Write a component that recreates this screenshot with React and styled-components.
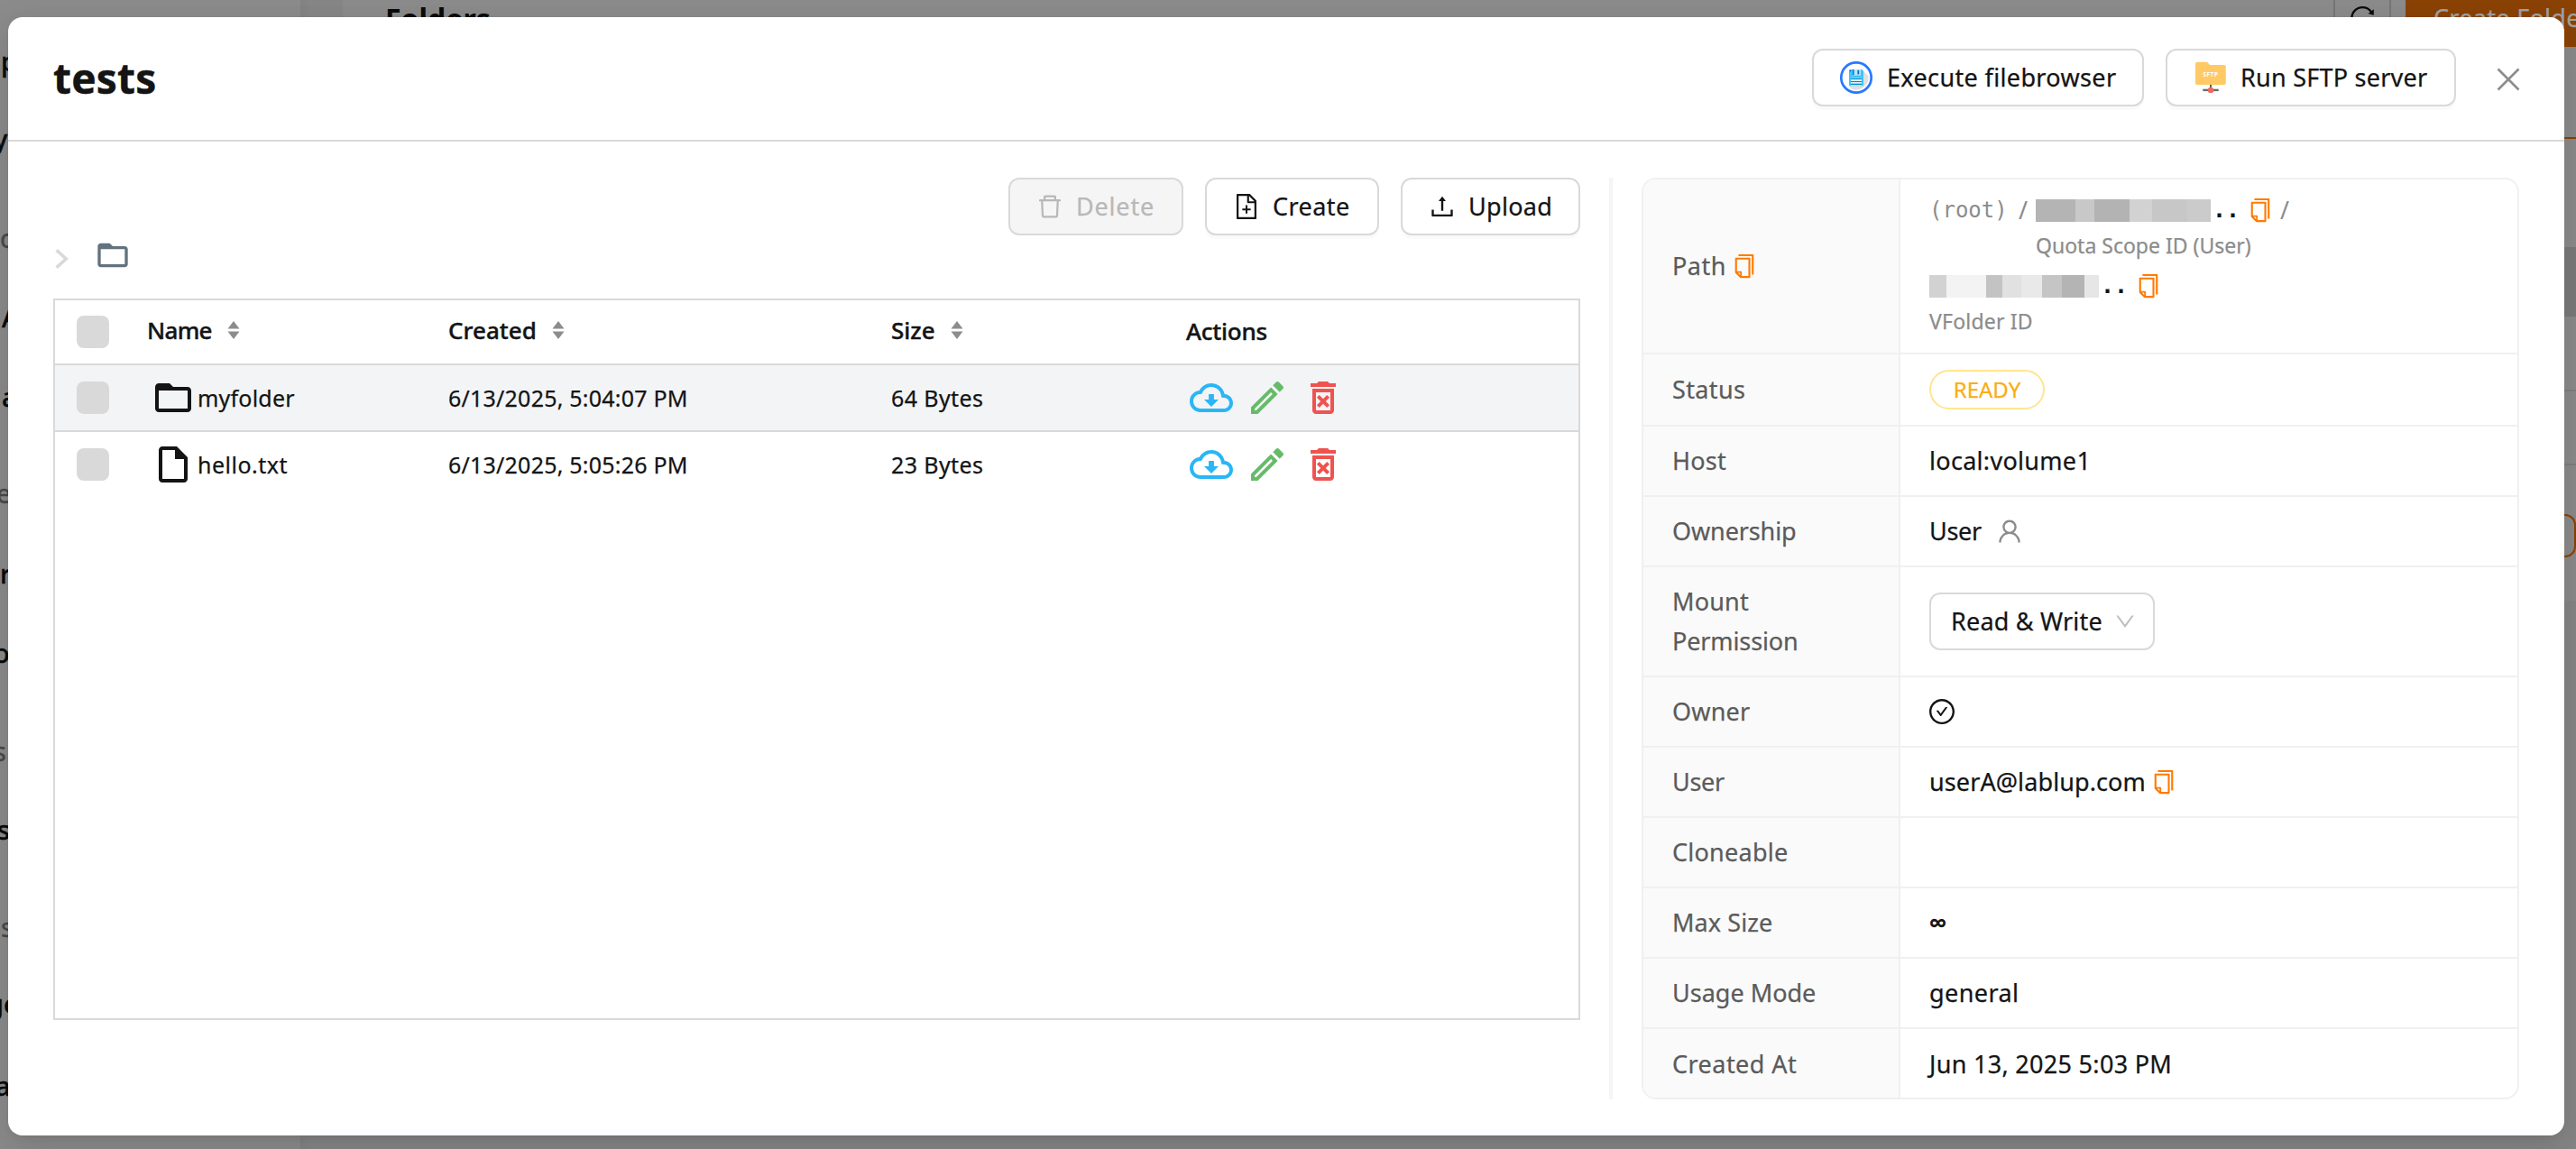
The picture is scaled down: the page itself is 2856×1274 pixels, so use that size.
import React from 'react';
import styled, { createGlobalStyle } from 'styled-components';
import {
  AiOutlineCopy,
  AiOutlineDelete,
  AiOutlineFileAdd,
  AiOutlineUpload,
  AiOutlineUser,
  AiOutlineDown,
  AiOutlineCheckCircle,
  AiOutlineReload,
} from 'react-icons/ai';

const GlobalStyle = createGlobalStyle`
  *, *::before, *::after { box-sizing: border-box; }
  html, body { margin: 0; padding: 0; }
  body {
    width: 2856px;
    height: 1274px;
    overflow: hidden;
    font-family: "Noto Sans", "Open Sans", sans-serif;
    font-size: 27px;
    line-height: 44px;
    color: #141414;
    background: #878787;
  }
  svg { display: block; flex: none; }
`;

const T = styled.span`
  letter-spacing: ${(p) => p.$ls || 0}px;
  white-space: nowrap;
  -webkit-text-stroke: ${(p) => p.$stroke ?? 0.25}px currentColor;
`;

/* ---------- page behind the dialog ---------- */

const Page = styled.div`
  display: flex;
  width: 2856px;
  height: 1274px;
  overflow: hidden;
  position: relative;
  background: #878787;
`;

const Sidebar = styled.div`
  width: 333px;
  height: 1274px;
  flex: none;
  background: #8c8c8c;
  box-shadow: 0 0 10px rgba(0, 0, 0, 0.08);
`;

const SideItem = styled.div`
  display: flex;
  align-items: flex-end;
  height: ${(p) => p.$h}px;
  font-size: 29px;
  line-height: 40px;
  font-weight: ${(p) => (p.$dim ? 400 : 500)};
  color: ${(p) => (p.$dim ? '#4a4a4a' : '#0b0b0b')};
`;

const SideText = styled.div`
  margin-left: ${(p) => p.$x}px;
  -webkit-text-stroke: 0.4px currentColor;
`;

const PageMain = styled.div`
  flex: 1;
  margin-left: 47px;
  height: 666px;
  background: #8c8c8c;
`;

const PageBar = styled.div`
  display: flex;
  align-items: flex-end;
  height: 52px;
  padding-left: 47px;
`;

const PageTitle = styled.div`
  flex: 1;
  height: 52px;
  line-height: 42px;
  font-size: 32px;
  font-weight: 700;
  color: #0b0b0b;
`;

const ReloadButton = styled.div`
  display: flex;
  align-items: center;
  justify-content: center;
  width: 64px;
  height: 64px;
  margin-right: 16px;
  border: 2px solid #777;
  color: #0b0b0b;
`;

const CreateFolderButton = styled.div`
  width: 189px;
  height: 64px;
  padding-left: 31px;
  line-height: 64px;
  background: #8c4305;
  color: #a3a3a3;
`;

const PageEdge = styled.div`
  display: flex;
  flex-direction: column;
  align-items: flex-end;
`;

const Band = styled.div`
  width: 100%;
  height: ${(p) => p.$h}px;
  background: ${(p) => p.$bg || 'transparent'};
  border-bottom: ${(p) => (p.$line ? `2px solid ${p.$line}` : 'none')};
`;

const EdgeButton = styled.div`
  width: 80px;
  height: 48px;
  margin: 54px 0 0;
  border: 2px solid #8c4305;
  border-radius: 12px;
`;

/* ---------- dialog ---------- */

const Dialog = styled.div`
  position: absolute;
  left: 9px;
  top: 19px;
  width: 2834px;
  height: 1240px;
  display: flex;
  flex-direction: column;
  background: #fff;
  border-radius: 16px;
  box-shadow:
    0 12px 32px rgba(0, 0, 0, 0.08),
    0 6px 12px -8px rgba(0, 0, 0, 0.12),
    0 18px 56px 16px rgba(0, 0, 0, 0.05);
`;

const DialogHeader = styled.div`
  display: flex;
  align-items: center;
  height: 138px;
  padding: 0 49px 2px 50px;
  border-bottom: 2px solid #d9d9d9;
`;

const DialogTitle = styled.h1`
  flex: 1;
  margin: 0;
  font-size: 46px;
  line-height: 60px;
  font-weight: 700;
  letter-spacing: 0.2px;
  -webkit-text-stroke: 0.5px currentColor;
`;

const HeaderActions = styled.div`
  display: flex;
  align-items: center;
  gap: 24px;
`;

const Button = styled.div`
  display: flex;
  align-items: center;
  gap: ${(p) => p.$gap || 13}px;
  width: ${(p) => p.$w}px;
  height: 64px;
  padding-left: ${(p) => p.$pl || 28}px;
  border: 2px solid #d9d9d9;
  border-radius: 12px;
  background: ${(p) => (p.$disabled ? '#f5f5f5' : '#fff')};
  color: ${(p) => (p.$disabled ? '#b8b8b8' : '#141414')};
  box-shadow: ${(p) => (p.$disabled ? 'none' : '0 4px 0 rgba(0, 0, 0, 0.02)')};
`;

const CloseButton = styled.div`
  margin: 4px 0 0 21px;
`;

const DialogBody = styled.div`
  display: flex;
  gap: 32px;
  flex: 1;
  padding: 40px 50px 0 50px;
`;

const Explorer = styled.div`
  display: flex;
  flex-direction: column;
  width: 1693px;
`;

const Toolbar = styled.div`
  display: flex;
  justify-content: flex-end;
  gap: 24px;
`;

const Breadcrumb = styled.div`
  display: flex;
  align-items: center;
  gap: 29px;
  height: 40px;
  margin: 2px 0 28px;
  padding-left: 2px;
`;

const CrumbArrow = styled.div`
  padding-top: 8px;
`;

const FileTable = styled.div`
  height: 800px;
  border: 2px solid #d9d9d9;
`;

const FileRow = styled.div`
  display: grid;
  grid-template-columns: 78px 334px 491px 327px 1fr;
  align-items: center;
  height: ${(p) => (p.$head ? 72 : 74)}px;
  padding-left: 24px;
  font-size: 25px;
  background: ${(p) => (p.$active ? '#f3f4f6' : '#fff')};
  border-bottom: 2px solid ${(p) => (p.$last ? 'transparent' : '#d9d9d9')};
`;

const HeadCell = styled.div`
  display: flex;
  align-items: center;
  gap: 17px;
  padding-bottom: ${(p) => (p.$plain ? 2 : 4)}px;
  font-size: 26px;
  font-weight: 500;
`;

const Cell = styled.div`
  display: flex;
  align-items: center;
  gap: ${(p) => p.$gap || 0}px;
  padding-left: ${(p) => p.$pl || 0}px;
`;

const Check = styled.div`
  width: 36px;
  height: 36px;
  border-radius: 8px;
  background: #d9d9d9;
`;

const Divider = styled.div`
  width: 4px;
  height: 1022px;
  background: #f5f5f5;
`;

const Details = styled.div`
  width: 973px;
  height: 1022px;
  border: 2px solid #f0f0f0;
  border-radius: 16px;
  overflow: hidden;
`;

const DetailRow = styled.div`
  display: flex;
  height: ${(p) => p.$h || 78}px;
  border-bottom: ${(p) => (p.$last ? 'none' : '2px solid #f0f0f0')};
`;

const Label = styled.div`
  display: flex;
  flex: none;
  align-items: center;
  gap: 5px;
  width: 285px;
  padding: 0 0 1px 32px;
  border-right: 2px solid #f0f0f0;
  background: #fafafa;
  color: #5b5b5b;
`;

const Value = styled.div`
  display: flex;
  align-items: center;
  flex: 1;
  gap: ${(p) => p.$gap || 0}px;
  padding: 0 0 1px ${(p) => p.$pl ?? 32}px;
`;

const CopyIcon = styled(AiOutlineCopy)`
  width: 30px;
  height: 30px;
  color: #ff7a00;
`;

const PathStack = styled.div`
  display: flex;
  flex-direction: column;
  padding-bottom: 3px;
`;

const PathLine = styled.div`
  display: flex;
  align-items: center;
  height: 42px;
  color: #8c8c8c;
`;

const Mono = styled.span`
  width: 99px;
  font-family: "DejaVu Sans Mono", monospace;
  font-size: 24px;
`;

const Slash = styled.span`
  width: 19px;
  font-size: 27px;
  white-space: pre;
`;

const Dots = styled.span`
  width: 40px;
  padding-left: 2px;
  font-family: "DejaVu Sans Mono", monospace;
  font-size: 25px;
  font-weight: 700;
  color: #141414;
`;

const Redacted = styled.div`
  display: flex;
  height: 25px;
`;

const Chip = styled.div`
  width: ${(p) => p.$w}px;
  background: ${(p) => p.$c};
`;

const Caption = styled.div`
  height: 36px;
  margin-bottom: ${(p) => p.$mb || 0}px;
  padding-left: ${(p) => p.$pl || 0}px;
  font-size: 23px;
  line-height: 36px;
  color: #8c8c8c;
`;

const Tag = styled.div`
  display: flex;
  align-items: center;
  justify-content: center;
  width: 128px;
  height: 44px;
  border: 2px solid #ffe58f;
  border-radius: 22px;
  font-size: 24px;
  color: #faad14;
`;

const Select = styled.div`
  display: flex;
  align-items: center;
  gap: 12px;
  width: 250px;
  height: 64px;
  padding-left: 22px;
  border: 2px solid #d9d9d9;
  border-radius: 12px;
`;

/* ---------- drawings ---------- */

const MaterialIcon = ({ d, size = 48, color = '#141414' }) => (
  <svg width={size} height={size} viewBox="0 0 24 24" fill={color}>
    <path d={d} />
  </svg>
);

const FOLDER = 'M20 6h-8l-2-2H4c-1.1 0-1.99.9-1.99 2L2 18c0 1.1.9 2 2 2h16c1.1 0 2-.9 2-2V8c0-1.1-.9-2-2-2zm0 12H4V8h16v10z';
const FILE = 'M6 2c-1.1 0-1.99.9-1.99 2L4 20c0 1.1.89 2 1.99 2H18c1.1 0 2-.9 2-2V8l-6-6H6zM6 4h7v5h5v11H6V4z';
const CLOUD = 'M19.35 10.04C18.67 6.59 15.64 4 12 4 9.11 4 6.6 5.64 5.35 8.04 2.34 8.36 0 10.91 0 14c0 3.31 2.69 6 6 6h13c2.76 0 5-2.24 5-5 0-2.64-2.05-4.78-4.65-4.96zM19 18H6c-2.21 0-4-1.79-4-4 0-2.05 1.53-3.76 3.56-3.97l1.07-.11.5-.95C8.08 7.14 9.94 6 12 6c2.62 0 4.88 1.86 5.39 4.43l.3 1.5 1.53.11c1.56.1 2.78 1.41 2.78 2.96 0 1.65-1.35 3-3 3zm-5.55-8h-2.9v3H8l4 4 4-4h-2.55z';
const PENCIL = 'M14.06 9.02l.92.92L5.92 19H5v-.92l9.06-9.06M17.66 3c-.25 0-.51.1-.7.29l-1.83 1.83 3.75 3.75 1.83-1.83c.39-.39.39-1.02 0-1.41l-2.34-2.34c-.2-.2-.45-.29-.71-.29zm-3.6 3.19L3 17.25V21h3.75L17.81 9.94l-3.75-3.75z';
const TRASH = 'M14.12 10.47L12 12.59l-2.13-2.12-1.41 1.41L10.59 14l-2.12 2.12 1.41 1.41L12 15.41l2.12 2.12 1.41-1.41L13.41 14l2.12-2.12zM15.5 4l-1-1h-5l-1 1H5v2h14V4zM6 19c0 1.1.9 2 2 2h8c1.1 0 2-.9 2-2V7H6v12zM8 9h8v10H8V9z';

const FileBrowserLogo = () => (
  <svg width="36" height="36" viewBox="0 0 36 36">
    <circle cx="18" cy="18" r="16.7" fill="#fff" stroke="#2979ff" strokeWidth="2.7" />
    <path d="M25.5 10 L31.5 16.5 A14 14 0 0 1 13 31 L10 27 Z" fill="#e0e0e0" />
    <path d="M11 9 H24.3 L26 10.8 V26.3 Q26 27.3 25 27.3 H11 Q10 27.3 10 26.3 V10 Q10 9 11 9 Z" fill="#40c4ff" />
    <rect x="14" y="9" width="9" height="6.6" fill="#b3e5fc" />
    <rect x="14" y="9" width="1.6" height="6.2" fill="#0c7fc4" />
    <rect x="19.4" y="9.8" width="1.8" height="4.6" fill="#0c6fae" />
    <rect x="10.8" y="10" width="1.4" height="1.4" fill="#1565c0" />
    <rect x="12" y="18.6" width="12" height="8.2" fill="#d6f1fd" />
    <path d="M12 19.5h12M12 22.5h12M12 25.4h12" stroke="#0288b8" strokeWidth="1.1" />
  </svg>
);

const SftpText = styled.text`
  font-family: "Noto Sans", sans-serif;
  font-size: 6.4px;
  font-weight: 700;
  letter-spacing: 0.6px;
  fill: #fff;
`;

const SftpLogo = () => (
  <svg width="36" height="36" viewBox="0 0 36 36">
    <path d="M18 25v6" stroke="#5b5b5b" strokeWidth="2" />
    <path d="M9.3 31.9h17.4" stroke="#6b6b6b" strokeWidth="2.4" />
    <circle cx="18" cy="31.9" r="3.2" fill="#f0695e" />
    <path d="M3 .7H13.2Q14.2 .7 14.9 1.5L17 3.9H32.9Q34.8 3.9 34.8 5.8V24Q34.8 26 32.9 26H3Q1 26 1 24V2.7Q1 .7 3 .7Z" fill="#ffca66" />
    <SftpText x="9.4" y="17.2">SFTP</SftpText>
  </svg>
);

const Sort = () => (
  <svg width="14" height="20" viewBox="0 0 14 20" fill="#8c8c8c">
    <path d="M7 0L13.5 8.4H.5zM7 20L.5 11.6h13z" />
  </svg>
);

const RowActions = () => (
  <Cell $gap={14} $pl={4}>
    <MaterialIcon d={CLOUD} color="#29b6f6" />
    <MaterialIcon d={PENCIL} color="#66bb6a" />
    <MaterialIcon d={TRASH} color="#ef5350" />
  </Cell>
);

const sideItems = [
  ['p', 88, 1], ['y', 86, -7], ['c', 110, 0, true], ['A', 88, 2], ['a', 88, 2],
  ['e', 107, -4, true], ['r', 89, 0], ['o', 88, -7], ['s', 109, -7, true],
  ['s', 87, -3], ['s', 108, 1, true], ['ge', 85, -14], ['a', 91, -5],
];

const files = [
  { name: 'myfolder', ls: 0.2, icon: FOLDER, created: '6/13/2025, 5:04:07 PM', size: '64 Bytes', active: true },
  { name: 'hello.txt', ls: 0.5, icon: FILE, created: '6/13/2025, 5:05:26 PM', size: '23 Bytes' },
];

const quotaChips = [[44, '#b4b4b4'], [21, '#c8c8c8'], [39, '#b3b3b3'], [25, '#d2d2d2'], [39, '#c7c7c7'], [26, '#cbcbcb']];
const folderChips = [[19, '#d2d2d2'], [44, '#f3f3f3'], [18, '#c3c3c3'], [21, '#e1e1e1'], [23, '#e9e9e9'], [22, '#c5c5c5'], [25, '#b4b4b4'], [16, '#e6e6e6']];

const Chips = ({ list }) => (
  <Redacted>
    {list.map(([w, c], i) => (
      <Chip key={i} $w={w} $c={c} />
    ))}
  </Redacted>
);

export default function App() {
  return (
    <Page>
      <GlobalStyle />
      <Sidebar>
        {sideItems.map(([t, h, x, dim], i) => (
          <SideItem key={i} $h={h} $dim={dim}>
            <SideText $x={x}>{t}</SideText>
          </SideItem>
        ))}
      </Sidebar>
      <PageMain>
        <PageBar>
          <PageTitle>Folders</PageTitle>
          <ReloadButton>
            <AiOutlineReload size={32} />
          </ReloadButton>
          <CreateFolderButton>
            <T $ls={0.3}>Create Folder</T>
          </CreateFolderButton>
        </PageBar>
        <PageEdge>
          <Band $h={102} $line="#8c4305" />
          <Band $h={120} />
          <Band $h={77} $bg="#7b7b7b" />
          <Band $h={83} $line="#7f7f7f" />
          <Band $h={82} $line="#7f7f7f" />
          <EdgeButton />
        </PageEdge>
      </PageMain>

      <Dialog>
        <DialogHeader>
          <DialogTitle>tests</DialogTitle>
          <HeaderActions>
            <Button $w={368} $pl={29} $gap={16}>
              <FileBrowserLogo />
              <T $ls={0.36}>Execute filebrowser</T>
            </Button>
            <Button $w={322} $pl={30} $gap={15}>
              <SftpLogo />
              <T $ls={0.24}>Run SFTP server</T>
            </Button>
            <CloseButton>
              <svg width="26" height="26" viewBox="0 0 26 26" stroke="#8c8c8c" strokeWidth="2.6" fill="none">
                <path d="M1.5 1.5L24.5 24.5M24.5 1.5L1.5 24.5" />
              </svg>
            </CloseButton>
          </HeaderActions>
        </DialogHeader>

        <DialogBody>
          <Explorer>
            <Toolbar>
              <Button $w={194} $disabled>
                <AiOutlineDelete size={32} />
                <T $ls={0.82}>Delete</T>
              </Button>
              <Button $w={193}>
                <AiOutlineFileAdd size={32} />
                <T $ls={0.44}>Create</T>
              </Button>
              <Button $w={199}>
                <AiOutlineUpload size={32} />
                <T $ls={0.3}>Upload</T>
              </Button>
            </Toolbar>
            <Breadcrumb>
              <CrumbArrow>
                <svg width="15" height="22" viewBox="0 0 15 22" fill="none" stroke="#d9d9d9" strokeWidth="3.6">
                  <path d="M1.6 1.3L12.4 11L1.6 20.7" />
                </svg>
              </CrumbArrow>
              <MaterialIcon d={FOLDER} size={40} color="#62727f" />
            </Breadcrumb>
            <FileTable>
              <FileRow $head>
                <Check />
                <HeadCell><T $ls={-0.7} $stroke={0.4}>Name</T><Sort /></HeadCell>
                <HeadCell><T $stroke={0.4}>Created</T><Sort /></HeadCell>
                <HeadCell><T $stroke={0.4}>Size</T><Sort /></HeadCell>
                <HeadCell $plain><T $ls={-0.24} $stroke={0.4}>Actions</T></HeadCell>
              </FileRow>
              {files.map((f, i) => (
                <FileRow key={f.name} $active={f.active} $last={i === files.length - 1}>
                  <Check />
                  <Cell $pl={5} $gap={3}>
                    <MaterialIcon d={f.icon} />
                    <T $ls={f.ls}>{f.name}</T>
                  </Cell>
                  <Cell><T $ls={0.22}>{f.created}</T></Cell>
                  <Cell><T $ls={0.4}>{f.size}</T></Cell>
                  <RowActions />
                </FileRow>
              ))}
            </FileTable>
          </Explorer>

          <Divider />

          <Details>
            <DetailRow $h={194}>
              <Label><T $ls={0.5}>Path</T><CopyIcon /></Label>
              <Value>
                <PathStack>
                  <PathLine>
                    <Mono>(root)</Mono>
                    <Slash>/</Slash>
                    <Chips list={quotaChips} />
                    <Dots>..</Dots>
                    <CopyIcon />
                    <Slash> /</Slash>
                  </PathLine>
                  <Caption $pl={118} $mb={6}><T>Quota Scope ID (User)</T></Caption>
                  <PathLine>
                    <Chips list={folderChips} />
                    <Dots>..</Dots>
                    <CopyIcon />
                  </PathLine>
                  <Caption><T $ls={0.2}>VFolder ID</T></Caption>
                </PathStack>
              </Value>
            </DetailRow>
            <DetailRow $h={80}>
              <Label><T $ls={0.37}>Status</T></Label>
              <Value><Tag><T>READY</T></Tag></Value>
            </DetailRow>
            <DetailRow>
              <Label><T $ls={0.24}>Host</T></Label>
              <Value><T $ls={0.3}>local:volume1</T></Value>
            </DetailRow>
            <DetailRow>
              <Label><T $ls={-0.12}>Ownership</T></Label>
              <Value $gap={15}>
                <T $ls={-0.3}>User</T>
                <AiOutlineUser size={32} color="#8c8c8c" />
              </Value>
            </DetailRow>
            <DetailRow $h={122}>
              <Label>
                <div>
                  <T $ls={0.2}>Mount</T>
                  <br />
                  <T $ls={-0.12}>Permission</T>
                </div>
              </Label>
              <Value>
                <Select>
                  <T $ls={0.2}>Read &amp; Write</T>
                  <AiOutlineDown size={26} color="#bfbfbf" />
                </Select>
              </Value>
            </DetailRow>
            <DetailRow>
              <Label><T $ls={0.19}>Owner</T></Label>
              <Value $pl={30}><AiOutlineCheckCircle size={32} /></Value>
            </DetailRow>
            <DetailRow>
              <Label><T $ls={-0.3}>User</T></Label>
              <Value $gap={5}>
                <T $ls={0.1}>userA@lablup.com</T>
                <CopyIcon />
              </Value>
            </DetailRow>
            <DetailRow>
              <Label><T $ls={0.25}>Cloneable</T></Label>
              <Value />
            </DetailRow>
            <DetailRow>
              <Label><T $ls={0.08}>Max Size</T></Label>
              <Value><T $stroke={1}>∞</T></Value>
            </DetailRow>
            <DetailRow>
              <Label><T>Usage Mode</T></Label>
              <Value><T $ls={0.42}>general</T></Value>
            </DetailRow>
            <DetailRow $last>
              <Label><T $ls={0.46}>Created At</T></Label>
              <Value><T $ls={0.3}>Jun 13, 2025 5:03 PM</T></Value>
            </DetailRow>
          </Details>
        </DialogBody>
      </Dialog>
    </Page>
  );
}
